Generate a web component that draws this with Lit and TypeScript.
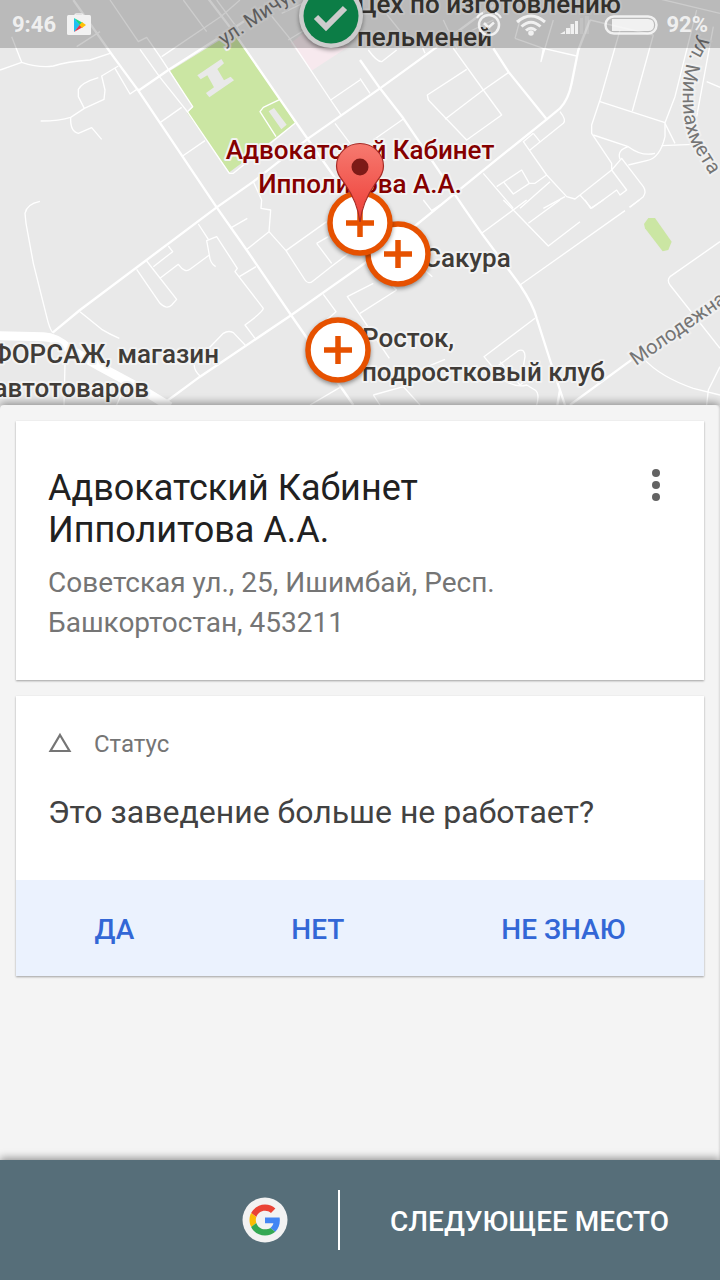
import { LitElement, html, css, svg } from "lit";
import { customElement, property } from "lit/decorators.js";

// Road geometry is kept on a grid three times finer than the map units.
const MAIN_ROADS = [
  "M220 0L340 170L415 272L650 622L740 750L875 948L1060 1215",
  "M158 998L240 930L650 622L760 545L925 415L1140 265L1305 145L1480 15",
  "M415 272L505 210L680 98L860 -20",
  "M590 -50L700 95L840 298L925 420L1080 640",
  "M1080 180L1140 265L1210 355L1395 628L1445 700L1560 855Q1600 915 1610 955L1650 1080L1680 1170L1695 1215",
  "M1480 145L1525 215L1640 358L1445 515L1310 625L1230 690L1080 800L870 948L600 1130L485 1215",
  "M1770 60L1735 150L1715 250Q1705 300 1680 325L1640 358",
  "M1710 1215L1880 1090L2160 890",
  "M1680 1170L1672 1215",
];

const MINOR_ROADS = [
  "M330 0L415 125L440 112L480 170L578 320L562 335L688 520L700 520L885 370",
  "M485 170L665 48L720 0M420 148L480 232L562 335M480 368L545 322M548 468L615 422",
  "M0 210L65 187Q120 205 160 198Q200 185 270 180L330 160M65 187L35 110",
  "M345 205L390 282L415 265M355 198L305 228L315 270L312 298L253 325L212 352Q180 363 122 363",
  "M295 233Q245 248 235 268L235 290L253 325M212 352Q210 395 235 400L275 383L305 418",
  "M120 604Q80 612 75 640L78 670L100 790L140 950Q148 985 158 998",
  "M800 30L865 110L992 300L1025 348M992 300L1080 240M1005 370L1050 430M845 40L930 0M865 120L1060 0",
  "M550 0L620 95M650 0L720 95M230 140L300 95M760 545L785 600",
  "M840 298L790 322L780 335L828 410",
  "M1360 145L1450 270L1505 345L1400 420L1285 300L1282 285L1400 208M1335 358L1450 270L1525 218",
  "M1680 335Q1700 360 1690 370L1590 450M1600 400L1570 425L1640 525L1700 590L1725 597L1835 510",
  "M1600 400L1620 425M1545 115L1560 60M1545 115L1630 145L1730 168M1630 145L1623 185L1660 60",
  "M1740 585L1775 625M1835 510L1880 570L1860 585L1850 570L1775 625",
  "M1860 90L1800 300L1775 375V400L1835 490V510L1865 475L1930 560Q1940 575 1930 590L1890 622",
  "M1960 105L1897 333M1800 305L1995 368M1770 60L1960 105M2090 30L2025 290L1995 368L1995 410Q1980 475 1940 482L1885 495",
  "M1995 370L2025 430M1985 437L2080 433M1780 405L1885 440Q1925 470 1965 460M1885 440Q1850 450 1860 478",
  "M1210 357L1120 420M1450 520L1540 625M1490 560L1565 510L1588 550L1540 582L1510 545M1588 550H1605L1640 525",
  "M1560 625L1650 545M1630 625L1695 590M1950 -10L2160 40M2140 80L2090 350M2120 245L2160 262",
  "M1105 150Q1130 185 1145 185L1190 150M1080 235L1110 280M1250 100L1275 160",
  "M1150 30L1230 130M1330 60L1370 145M1305 145L1480 60",
  "M410 808L480 910Q500 930 515 915L530 898L440 783M460 800L518 755L505 738",
  "M480 835L535 793Q555 820 570 808L628 765L620 722L650 710L712 805L705 815L790 925Q790 935 735 975L765 1015",
  "M595 672L625 718M628 765Q630 790 647 800M690 685L742 655M738 750L807 695L812 630L783 625L785 600",
  "M807 695L858 752L915 840Q925 855 940 842L1000 795L1060 750M858 752L980 665M950 730L995 790M950 730L985 710",
  "M718 830L768 800M970 883L1008 935L980 960M600 1128Q580 1110 583 1090L670 1000Q685 990 700 998L738 1038",
  "M1120 850L1042 890L1080 945L1168 1075M240 935L305 988Q330 1003 358 1015M930 1215L1020 1162",
  "M195 1090L192 1215M350 1215L370 1170M1190 870L1080 940M1190 870L1170 850M1210 1130L1335 1078",
  "M1120 1185L1210 1160L1260 1215M1120 1185L1140 1215M1250 790L1297 830",
  "M1270 600L1295 632L1320 615M1510 600L1545 635L1645 738L1740 665M1445 700L1580 600M1585 670L1680 600",
  "M1755 600L1772 625L1810 600M1888 622L1918 600M1560 855L1875 632",
  "M1605 955L1452 1070L1510 1140Q1550 1165 1580 1155L1605 1170Q1620 1180 1610 1215",
  "M1490 1100L1555 1052Q1575 1045 1575 1070L1570 1100M1500 1085L1560 1155L1590 1130",
  "M2160 725L2010 830Q2000 840 2010 855L2160 1045",
  "M1930 1075Q1980 1130 2080 1165L2160 1185M2120 1215L2125 1170L2160 1100",
];

interface Spot {
  x: number;
  y: number;
}

const SPOTS: Spot[] = [
  { x: 398, y: 254 },
  { x: 338, y: 350 },
  { x: 360, y: 223 },
];

@customElement("city-map")
class CityMap extends LitElement {
  static styles = css`
    :host {
      display: block;
      overflow: hidden;
      background: #e9e9e9;
    }
    .canvas {
      display: block;
      width: 100%;
      height: 100%;
    }
    .road {
      fill: none;
      stroke: #fff;
      stroke-linejoin: round;
    }
    .place {
      font: 500 26px Roboto, sans-serif;
      fill: #403c38;
      stroke: #f3f3f3;
      stroke-width: 4px;
      stroke-linejoin: round;
      paint-order: stroke;
    }
    .current {
      fill: #850000;
    }
    .street {
      font: 400 20px Roboto, sans-serif;
      fill: #757575;
      stroke: #f0f0f0;
      stroke-width: 4px;
      paint-order: stroke;
    }
    .end {
      text-anchor: end;
    }
    .middle {
      text-anchor: middle;
    }
    .lift {
      filter: drop-shadow(0 2px 2px rgba(0, 0, 0, 0.4));
    }
  `;

  render() {
    return html`
      <svg class="canvas" viewBox="0 0 720 405" preserveAspectRatio="xMidYMid slice" role="img" aria-label="Карта">
        <defs>
          <linearGradient id="pin" x1="0" y1="0" x2="0" y2="1">
            <stop offset="0" stop-color="#f67a70" />
            <stop offset="1" stop-color="#ee3d36" />
          </linearGradient>
          <path id="curve" d="M701 36Q683 60 683 90Q681 130 698 155L724 197" />
        </defs>
        <g transform="scale(0.33333)">
          <path fill="#cbe6a3" d="M510 213L700 95L840 298L885 370L688 517L562 340L578 322Z" />
          <path fill="#cbe6a3" d="M852 72L865 54H885L935 125L925 150L908 154L855 85Z" transform="translate(1080 600)" />
          <path fill="#f7e9ee" d="M872 130L935 212L1045 140L960 60Z" />
          <path fill="#e9e9e9" d="M592 226L664 177L672 190L652 207L672 241L692 230L702 241L628 292L618 279L642 262L622 226L602 238ZM806 334L822 324L860 374L844 388Z" />
          <g class="road" stroke-width="4">${MINOR_ROADS.map((d) => svg`<path d=${d} />`)}</g>
          <g class="road" stroke-width="7">${MAIN_ROADS.map((d) => svg`<path d=${d} />`)}</g>
          <path class="road" stroke-width="27" d="M-10 1007L130 1010Q170 1012 205 1045L300 1100L420 1165L510 1220" />
        </g>

        <text class="street" transform="translate(224 46) rotate(-34)">ул. Мичурина</text>
        <text class="street" transform="translate(636 366) rotate(-35)">Молодежная</text>
        <text class="street"><textPath href="#curve">ул. Миниахмета</textPath></text>

        <text class="place end" x="621" y="13">Цех по изготовлению</text>
        <text class="place" x="357" y="46">пельменей</text>
        <text class="place" x="424" y="267">Сакура</text>
        <text class="place" x="362" y="347">Росток,</text>
        <text class="place" x="362" y="381">подростковый клуб</text>
        <text class="place end" x="219" y="363">ФОРСАЖ, магазин</text>
        <text class="place end" x="149" y="397">автотоваров</text>
        <text class="place current middle" x="360" y="159">Адвокатский Кабинет</text>
        <text class="place current middle" x="360" y="193">Ипполитова А.А.</text>

        <g class="lift">
          <circle cx="331" cy="16" r="32" fill="#fff" />
          <circle cx="331" cy="16" r="27.5" fill="#0f9d58" />
          <path d="M316 17L326 27L345 8" fill="none" stroke="#fff" stroke-width="6" />
        </g>
        ${SPOTS.map(
          (s) => svg`
            <g class="lift" transform="translate(${s.x} ${s.y})">
              <circle r="30" fill="#fff" stroke="#e65100" stroke-width="5.5" />
              <path d="M-14 0H14M0 -14V14" stroke="#e65100" stroke-width="5.5" />
            </g>`
        )}
        <path
          d="M360 222C358 206 352 194 345 184C340 177 336.500 173 336.500 166A23.500 22.500 0 0 1 383.500 166C383.500 173 380 177 375 184C368 194 362 206 360 222Z"
          fill="url(#pin)" stroke="#a52b26" stroke-width="1.200" />
        <circle cx="360" cy="167" r="8.500" fill="#7d1a17" />
      </svg>
    `;
  }
}

@customElement("status-bar")
class StatusBar extends LitElement {
  @property() time = "9:46";
  @property() battery = "92%";

  static styles = css`
    :host {
      display: flex;
      align-items: center;
      box-sizing: border-box;
      height: 48px;
      padding: 2px 12px 0;
      background: rgba(0, 0, 0, 0.2);
      color: rgba(255, 255, 255, 0.8);
      font: 700 22px/28px Roboto, sans-serif;
    }
    .time {
      margin-right: 11px;
    }
    .tray {
      display: flex;
      align-items: center;
      gap: 14px;
      margin-left: auto;
    }
    .power {
      display: flex;
      align-items: center;
      gap: 8px;
    }
    svg {
      display: block;
    }
  `;

  render() {
    return html`
      <span class="time">${this.time}</span>
      <svg width="24" height="24" viewBox="0 0 24 24">
        <path d="M8 4V2Q8 1 9.500 1H14.500Q16 1 16 2V4" fill="none" stroke="#eee" stroke-width="1.500" />
        <rect y="2" width="24" height="20" rx="1.500" fill="#f2f2f2" />
        <path d="M7 5V19L13 12Z" fill="#1fc0f2" />
        <path d="M7 5L16 10L13 12.500Z" fill="#12d68a" />
        <path d="M7 19L16 14L13 11.500Z" fill="#e8344e" />
        <path d="M15 9L19 12L15 15L12.500 12Z" fill="#ffc107" />
      </svg>
      <div class="tray">
        <svg width="26" height="26" viewBox="0 0 26 26" fill="none" stroke="currentColor">
          <circle cx="13" cy="13" r="10" stroke-width="2.500" />
          <path d="M8 11L12.500 15.500L18 10.500" stroke-width="2.500" />
          <path d="M1 6Q3 2 7 1M19 1Q23 2 25 6" stroke-width="2" />
        </svg>
        <svg width="30" height="22" viewBox="0 0 30 22" fill="none" stroke="currentColor" stroke-width="3">
          <path d="M1 8Q15 -4 29 8M5.500 12.500Q15 4 24.500 12.500M10 16.500Q15 12 20 16.500" />
          <circle cx="15" cy="19" r="2.800" fill="currentColor" stroke="none" />
        </svg>
        <svg width="30" height="18" viewBox="0 0 30 18" fill="currentColor">
          <path d="M0 18L5 15V18ZM6 12H10V18H6ZM10.500 8H14V18H10.500ZM15 5H18V18H15Z" />
          <path d="M20 2H23V18H20ZM25 0H29V18H25Z" opacity="0.150" />
        </svg>
        <div class="power">
          <svg width="54" height="20" viewBox="0 0 54 20">
            <rect x="1.500" y="1.500" width="51" height="17" rx="8.500" fill="none" stroke="currentColor" stroke-width="2.500" />
            <path d="M8 4H44Q50 4 50 10T44 16H8Z" fill="currentColor" />
          </svg>
          <span>${this.battery}</span>
        </div>
      </div>
    `;
  }
}

@customElement("app-root")
class AppRoot extends LitElement {
  static styles = css`
    :host {
      display: flex;
      flex-direction: column;
      min-height: 100vh;
      background: #f4f4f4;
      font-family: Roboto, sans-serif;
    }
    button {
      margin: 0;
      padding: 4px 0 0;
      border: 0;
      background: none;
      font: 500 28px/32px Roboto, sans-serif;
      cursor: pointer;
    }
    svg {
      display: block;
    }
    .top {
      display: grid;
      position: relative;
    }
    .map {
      height: 405px;
    }
    .status {
      position: absolute;
      inset: 0 0 auto;
    }
    .panel {
      flex: 1;
      display: flex;
      flex-direction: column;
      gap: 16px;
      padding: 16px;
      position: relative;
      border-radius: 4px 4px 0 0;
      background: #f4f4f4;
      box-shadow: 0 -2px 8px rgba(0, 0, 0, 0.4), inset -2px 0 2px -1px rgba(0, 0, 0, 0.12);
    }
    .card {
      background: #fff;
      box-shadow: 0 1px 2px rgba(0, 0, 0, 0.35);
    }
    .place {
      display: flex;
      justify-content: space-between;
      align-items: flex-start;
      padding: 46px 32px 37px;
    }
    .details {
      max-width: 500px;
    }
    .title {
      max-width: 400px;
      margin: 0 0 12px;
      font: 400 36px/42px Roboto, sans-serif;
      color: #212121;
    }
    .address {
      margin: 0;
      font-size: 28px;
      line-height: 40px;
      color: #757575;
    }
    .more {
      display: grid;
      place-items: center;
      width: 32px;
      height: 36px;
      padding: 0;
    }
    .question {
      display: flex;
      flex-direction: column;
      gap: 35px;
      padding: 34px 32px 49px;
    }
    .topic {
      display: flex;
      align-items: center;
      gap: 22px;
      font-size: 24px;
      line-height: 28px;
      color: #757575;
    }
    .ask {
      margin: 0;
      font: 400 32px/38px Roboto, sans-serif;
      color: #424242;
    }
    .answers {
      display: flex;
      justify-content: space-around;
      height: 96px;
      background: #ebf2fe;
    }
    .answer {
      color: #3367d6;
    }
    .bottom {
      position: relative;
      display: flex;
      align-items: center;
      justify-content: flex-end;
      gap: 50px;
      height: 120px;
      padding: 0 51px;
      box-sizing: border-box;
      background: #566e79;
      box-shadow: 0 -2px 8px rgba(0, 0, 0, 0.4);
    }
    .divider {
      width: 2px;
      height: 60px;
      background: #fff;
    }
    .next {
      color: #fff;
    }
  `;

  render() {
    return html`
      <header class="top">
        <city-map class="map"></city-map>
        <status-bar class="status"></status-bar>
      </header>
      <main class="panel">
        <section class="card place">
          <div class="details">
            <h1 class="title">Адвокатский Кабинет Ипполитова А.А.</h1>
            <p class="address">Советская ул., 25, Ишимбай, Респ. Башкортостан, 453211</p>
          </div>
          <button class="more" aria-label="Ещё">
            <svg width="8" height="32" viewBox="0 0 8 32" fill="#636363">
              <circle cx="4" cy="4" r="4" />
              <circle cx="4" cy="16" r="4" />
              <circle cx="4" cy="28" r="4" />
            </svg>
          </button>
        </section>
        <section class="card">
          <div class="question">
            <div class="topic">
              <svg width="24" height="24" viewBox="0 0 24 24">
                <path d="M12 3L21.500 19H2.500Z" fill="none" stroke="#757575" stroke-width="2.200" />
              </svg>
              <span>Статус</span>
            </div>
            <h2 class="ask">Это заведение больше не работает?</h2>
          </div>
          <div class="answers">
            ${["ДА", "НЕТ", "НЕ ЗНАЮ"].map((a) => html`<button class="answer">${a}</button>`)}
          </div>
        </section>
      </main>
      <footer class="bottom">
        <svg width="46" height="46" viewBox="0 0 46 46" role="img" aria-label="Google">
          <circle cx="23" cy="23" r="22.500" fill="#f2f2f2" />
          <g transform="translate(7.500 7.500) scale(0.646)">
            <path fill="#ea4335" d="M24 9.500c3.540 0 6.710 1.220 9.210 3.600l6.850-6.850C35.900 2.380 30.470 0 24 0 14.620 0 6.510 5.380 2.560 13.220l7.980 6.190C12.430 13.720 17.740 9.500 24 9.500z" />
            <path fill="#4285f4" d="M46.980 24.550c0-1.570-.15-3.090-.38-4.550H24v9.020h12.940c-.58 2.960-2.260 5.480-4.780 7.180l7.730 6c4.510-4.180 7.090-10.360 7.090-17.650z" />
            <path fill="#fbbc05" d="M10.530 28.590c-.48-1.450-.76-2.990-.76-4.590s.27-3.140.76-4.590l-7.980-6.190C.92 16.460 0 20.120 0 24c0 3.880.92 7.540 2.560 10.780l7.970-6.190z" />
            <path fill="#34a853" d="M24 48c6.480 0 11.930-2.130 15.890-5.810l-7.730-6c-2.150 1.450-4.920 2.300-8.160 2.300-6.260 0-11.570-4.220-13.470-9.910l-7.980 6.190C6.510 42.620 14.620 48 24 48z" />
          </g>
        </svg>
        <span class="divider"></span>
        <button class="next">СЛЕДУЮЩЕЕ МЕСТО</button>
      </footer>
    `;
  }
}
